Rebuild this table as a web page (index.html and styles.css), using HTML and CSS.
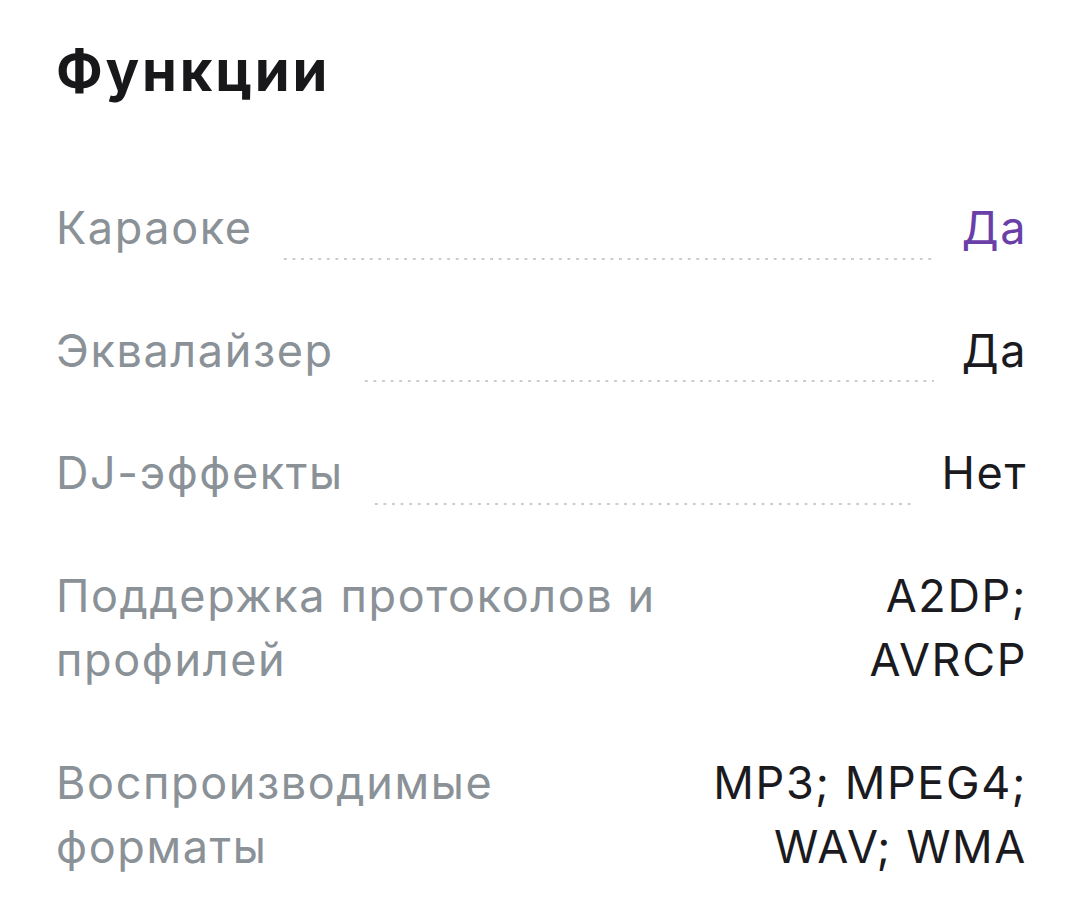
FILE: index.html
```html
<!DOCTYPE html>
<html lang="ru">
<head>
<meta charset="utf-8">
<title>Функции</title>
<link rel="stylesheet" href="styles.css">
</head>
<body>
<section class="specs">
  <h1 class="specs-title">Функции</h1>
  <dl class="specs-list">
    <div class="spec-row">
      <dt class="spec-label">Караоке</dt>
      <span class="spec-dots"></span>
      <dd class="spec-value spec-value--accent">Да</dd>
    </div>
    <div class="spec-row">
      <dt class="spec-label">Эквалайзер</dt>
      <span class="spec-dots"></span>
      <dd class="spec-value">Да</dd>
    </div>
    <div class="spec-row">
      <dt class="spec-label">DJ-эффекты</dt>
      <span class="spec-dots"></span>
      <dd class="spec-value">Нет</dd>
    </div>
    <div class="spec-row">
      <dt class="spec-label">Поддержка протоколов и профилей</dt>
      <span class="spec-dots"></span>
      <dd class="spec-value">A2DP; AVRCP</dd>
    </div>
    <div class="spec-row">
      <dt class="spec-label">Воспроизводимые форматы</dt>
      <span class="spec-dots"></span>
      <dd class="spec-value">MP3; MPEG4; WAV; WMA</dd>
    </div>
  </dl>
</section>
</body>
</html>
```

FILE: styles.css
```css
html, body {
  margin: 0;
  padding: 0;
  background: #ffffff;
}

body {
  font-family: Inter, "Noto Sans", "Liberation Sans", sans-serif;
  color: #1b1b1f;
}

.specs {
  padding: 37px 53px 0 56px;
}

.specs-title {
  margin: 0 0 91px;
  font-size: 56px;
  line-height: 68px;
  font-weight: 700;
  color: #18181b;
  letter-spacing: 2.8px;
}

.specs-list {
  margin: 0;
  display: flex;
  flex-direction: column;
  gap: 58px;
}

.spec-row {
  display: flex;
  align-items: flex-start;
  gap: 28px;
  font-size: 45px;
  line-height: 64.5px;
  letter-spacing: 1.6px;
}

.spec-label {
  margin: 0;
  flex: 0 1 auto;
  color: #8a9197;
}

.spec-dots {
  flex: 1 1 0;
  min-width: 0;
  height: 64.5px;
  background-image: radial-gradient(circle, #c9cdd1 1.1px, transparent 1.4px);
  background-size: 8.6px 4px;
  background-repeat: repeat-x;
  background-position: left bottom;
}

.spec-value {
  margin: 0;
  flex: 0 1.5 auto;
  text-align: right;
  color: #1b1b1f;
}

.spec-value--accent {
  color: #6a3fa8;
}
```
